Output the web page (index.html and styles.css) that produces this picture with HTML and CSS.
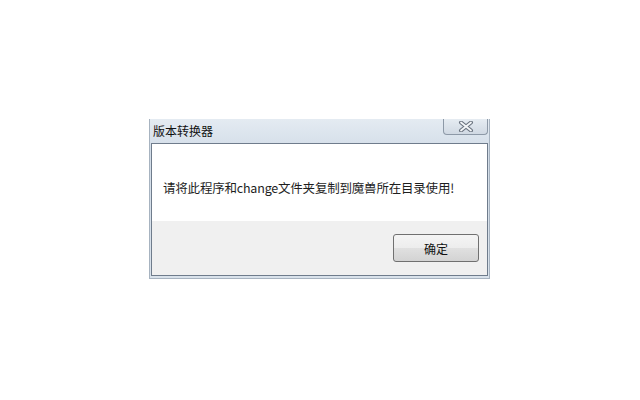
FILE: index.html
```html
<!DOCTYPE html>
<html lang="zh-CN">
<head>
<meta charset="utf-8">
<link rel="stylesheet" href="styles.css">
</head>
<body>
<div class="page">
  <div class="window">
    <div class="titlebar">
      <span class="title">版本转换器</span>
      <div class="close">
        <svg width="16" height="11" viewBox="0 0 16 11"><path d="M3 1.5 L13 9.5 M13 1.5 L3 9.5" stroke="#6b7480" stroke-width="4" stroke-linecap="round"/><path d="M3 1.5 L13 9.5 M13 1.5 L3 9.5" stroke="#f4f6f8" stroke-width="1.8" stroke-linecap="round"/></svg>
      </div>
    </div>
    <div class="client">
      <div class="message">请将此程序和change文件夹复制到魔兽所在目录使用!</div>
      <div class="footer">
        <button class="ok">确定</button>
      </div>
    </div>
  </div>
</div>
</body>
</html>
```
FILE: styles.css
```css
html, body {
  margin: 0;
  padding: 0;
  background: #ffffff;
}
.page {
  padding: 119px 0 0 149px;
  font-family: "Noto Sans CJK SC", "Microsoft YaHei", sans-serif;
}
.window {
  width: 341px;
  height: 160px;
  box-sizing: border-box;
  background: linear-gradient(to bottom, #e4ebf2 0%, #d3dde8 20%, #d9e2eb 100%);
  border: 1px solid #a7b3c0;
  border-top: none;
  padding: 0 1px 2px 1px;
  display: flex;
  flex-direction: column;
}
.titlebar {
  height: 24px;
  display: flex;
  justify-content: space-between;
  align-items: flex-start;
}
.title {
  font-size: 12px;
  line-height: 12px;
  color: #111;
  margin: 6px 0 0 2px;
}
.close {
  width: 45px;
  height: 16px;
  box-sizing: border-box;
  border: 1px solid #8d99a7;
  border-top: none;
  border-radius: 0 0 4px 4px;
  background: linear-gradient(to bottom, #e6ecf2, #d0d9e3);
  display: flex;
  align-items: center;
  justify-content: center;
}
.close svg {
  display: block;
}
.client {
  flex: 1;
  border: 1px solid #6f7c8c;
  background: #f0f0f0;
  display: flex;
  flex-direction: column;
}
.message {
  background: #ffffff;
  height: 77px;
  box-sizing: border-box;
  padding: 34px 0 0 11px;
  font-size: 12.5px;
  line-height: 20px;
  color: #1e1e1e;
  letter-spacing: -0.2px;
}
.footer {
  flex: 1;
  display: flex;
  justify-content: flex-end;
  align-items: flex-start;
  padding: 13px 8px 0 0;
}
.ok {
  width: 86px;
  height: 28px;
  border: 1px solid #707070;
  border-radius: 3px;
  background: linear-gradient(to bottom, #f4f4f4 0%, #ededed 50%, #e0e0e0 51%, #d3d3d3 100%);
  font-family: "Noto Sans CJK SC", sans-serif;
  font-size: 12px;
  color: #111;
  padding: 0;
}
```
